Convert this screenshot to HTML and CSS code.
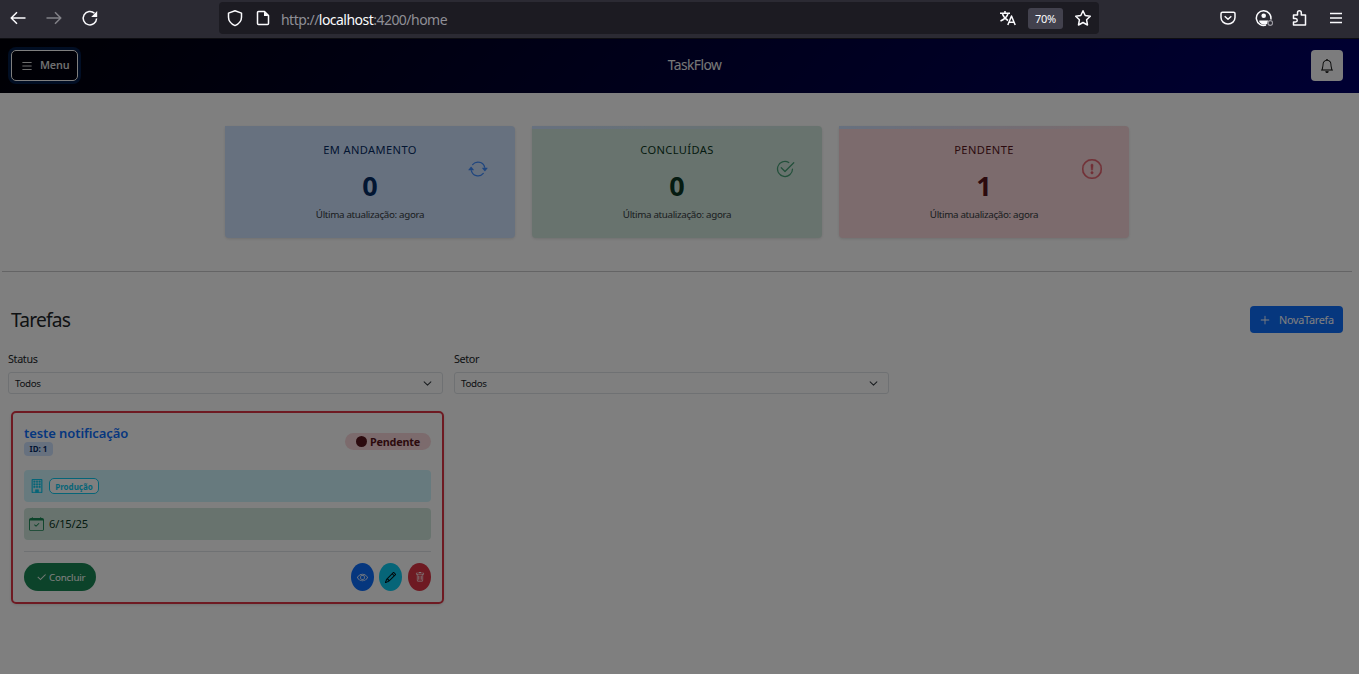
FILE: index.html
```html
<!DOCTYPE html>
<html lang="pt-BR">
<head>
<meta charset="utf-8">
<title>TaskFlow</title>
<link rel="stylesheet" href="styles.css">
</head>
<body>
<div class="browser">
  <div class="nav">
    <svg width="18" height="18" viewBox="0 0 18 18" class="line"><path d="M16.500 9H2M8 3.200 2.200 9 8 14.800"/></svg>
    <svg width="18" height="18" viewBox="0 0 18 18" class="line dim"><path d="M1.500 9H16M10 3.200 15.800 9 10 14.800"/></svg>
    <svg width="18" height="18" viewBox="0 0 18 18" class="line"><path d="M15.600 9.500A6.700 6.700 0 1 1 13.500 4.300"/><path class="solid" d="M16.200 2v6h-6z"/></svg>
  </div>
  <div class="address">
    <svg width="18" height="18" viewBox="0 0 18 18" class="line shield"><path d="M9 1.700 15.500 4.100v4.200c0 3.900-2.800 6.700-6.500 8.300C5.300 15 2.500 12.200 2.500 8.300V4.100z"/></svg>
    <svg width="14" height="16" viewBox="0 0 14 16" class="line file"><path d="M2.500 1.500H8.500L12.500 5.500v8a1 1 0 0 1-1 1H2.500a1 1 0 0 1-1-1v-11a1 1 0 0 1 1-1z"/><path class="solid" d="M8 1.500v4.500h4.500z"/></svg>
    <div class="url">http://<b>localhost</b>:4200/home</div>
    <svg width="18" height="18" viewBox="0 0 18 18" class="line translate"><path d="M1 4.200h10M6 2v2M9 4.500C8 8.500 5 10.500 1.500 12M3.500 5c1 3 3 5 5.500 6.500M8.800 16l3.700-9 3.700 9M10.200 13.200h4.600"/></svg>
    <div class="zoom">70%</div>
    <svg width="18" height="18" viewBox="0 0 18 18" class="line star"><path d="m9 1.800 2.200 4.700 5.100.7-3.700 3.600.9 5.200L9 13.500 4.500 16l.9-5.200L1.700 7.200l5.100-.7z"/></svg>
  </div>
  <div class="tools">
    <svg width="18" height="18" viewBox="0 0 18 18" class="line"><path d="M3.500 3.200h11a1.500 1.500 0 0 1 1.500 1.500v3.800a7 6.500 0 0 1-14 0V4.700a1.500 1.500 0 0 1 1.500-1.500zM5.700 7.200 9 10.300l3.300-3.100"/></svg>
    <svg width="18" height="18" viewBox="0 0 18 18" class="line"><path d="M11 16A7.300 7.300 0 1 1 15.800 10.500"/><circle class="solid" cx="8.700" cy="6.800" r="2.300"/><path class="solid" d="M4.300 11.500h8.800l-1 3.500c-2.500 1.200-6 .5-7.800-2z"/><circle class="dot" cx="15.300" cy="14" r="2.300"/></svg>
    <svg width="18" height="18" viewBox="0 0 18 18" class="line"><path d="M2.500 6h4V3.700a1.900 1.900 0 0 1 3.800 0V6h4.200v10h-12v-3h2a1.700 1.700 0 0 0 0-3.500h-2z"/></svg>
    <svg width="18" height="18" viewBox="0 0 18 18" class="line"><path d="M3 4.500h12M3 9h12M3 13.500h12"/></svg>
  </div>
</div>
<div class="page">
  <header class="topbar">
    <button class="menu"><svg width="14" height="14" viewBox="0 0 16 16" class="bi"><path d="M2.500 12a.5.5 0 0 1 .5-.5h10a.5.5 0 0 1 0 1H3a.5.5 0 0 1-.5-.5m0-4a.5.5 0 0 1 .5-.5h10a.5.5 0 0 1 0 1H3a.5.5 0 0 1-.5-.5m0-4a.5.5 0 0 1 .5-.5h10a.5.5 0 0 1 0 1H3a.5.5 0 0 1-.5-.5"/></svg><span>Menu</span></button>
    <div class="brand">TaskFlow</div>
    <button class="bell"><svg width="14" height="14" viewBox="0 0 16 16" class="bi"><path d="M8 16a2 2 0 0 0 2-2H6a2 2 0 0 0 2 2M8 1.918l-.797.161A4 4 0 0 0 4 6c0 .628-.134 2.197-.459 3.742-.16.767-.376 1.566-.663 2.258h10.244c-.287-.692-.502-1.490-.663-2.258C12.134 8.197 12 6.628 12 6a4 4 0 0 0-3.203-3.920zM14.220 12c.223.447.481.801.780 1H1c.299-.199.557-.553.780-1C2.680 10.200 3 6.880 3 6c0-2.420 1.720-4.440 4.005-4.901a1 1 0 1 1 1.990 0A5 5 0 0 1 13 6c0 .880.320 4.200 1.220 6"/></svg></button>
  </header>

  <section class="stats">
    <article class="stat primary">
      <div class="stat-text"><h6>EM ANDAMENTO</h6><strong>0</strong><small>Última atualização: agora</small></div>
      <svg width="20" height="20" viewBox="0 0 16 16" class="bi"><path d="M11.534 7h3.932a.25.25 0 0 1 .192.410l-1.966 2.360a.25.25 0 0 1-.384 0l-1.966-2.360a.25.25 0 0 1 .192-.410m-11 2h3.932a.25.25 0 0 0 .192-.410L2.692 6.230a.25.25 0 0 0-.384 0L.342 8.590A.25.25 0 0 0 .534 9"/><path fill-rule="evenodd" d="M8 3c-1.552 0-2.940.707-3.857 1.818a.5.5 0 1 1-.771-.636A6.002 6.002 0 0 1 13.917 7H12.900A5 5 0 0 0 8 3M3.100 9a5.002 5.002 0 0 0 8.757 2.182.5.5 0 1 1 .771.636A6.002 6.002 0 0 1 2.083 9z"/></svg>
    </article>
    <article class="stat success">
      <div class="stat-text"><h6>CONCLUÍDAS</h6><strong>0</strong><small>Última atualização: agora</small></div>
      <svg width="20" height="20" viewBox="0 0 16 16" class="bi"><path d="M2.500 8a5.500 5.500 0 0 1 8.250-4.764.5.5 0 0 0 .5-.866A6.500 6.500 0 1 0 14.500 8a.5.5 0 0 0-1 0 5.500 5.500 0 1 1-11 0"/><path d="M15.354 3.354a.5.5 0 0 0-.708-.708L8 9.293 5.354 6.646a.5.5 0 1 0-.708.708l3 3a.5.5 0 0 0 .708 0z"/></svg>
    </article>
    <article class="stat danger">
      <div class="stat-text"><h6>PENDENTE</h6><strong>1</strong><small>Última atualização: agora</small></div>
      <svg width="20" height="20" viewBox="0 0 16 16" class="bi heavy"><path d="M8 15A7 7 0 1 1 8 1a7 7 0 0 1 0 14m0 1A8 8 0 1 0 8 0a8 8 0 0 0 0 16"/><path d="M7.002 11a1 1 0 1 1 2 0 1 1 0 0 1-2 0M7.100 4.995a.905.905 0 1 1 1.800 0l-.350 3.507a.552.552 0 0 1-1.100 0z"/></svg>
    </article>
  </section>

  <hr class="divider">

  <div class="heading">
    <h1>Tarefas</h1>
    <button class="new"><svg width="14" height="14" viewBox="0 0 16 16" class="bi"><path d="M8 3a.5.5 0 0 1 .5.5v4h4a.5.5 0 0 1 0 1h-4v4a.5.5 0 0 1-1 0v-4h-4a.5.5 0 0 1 0-1h4v-4A.5.5 0 0 1 8 3"/></svg><span>NovaTarefa</span></button>
  </div>

  <div class="filters">
    <div class="field"><label>Status</label><div class="select"><span>Todos</span><svg width="9" height="9" viewBox="0 0 16 16"><path d="m2 5 6 6 6-6"/></svg></div></div>
    <div class="field"><label>Setor</label><div class="select"><span>Todos</span><svg width="9" height="9" viewBox="0 0 16 16"><path d="m2 5 6 6 6-6"/></svg></div></div>
  </div>

  <article class="task">
    <div class="task-head">
      <div><h5>teste notificação</h5><span class="id">ID: 1</span></div>
      <span class="status"><i></i><span>Pendente</span></span>
    </div>
    <div class="row sector">
      <svg width="14" height="14" viewBox="0 0 16 16" class="bi heavy"><path d="M4 2.500a.5.5 0 0 1 .5-.5h1a.5.5 0 0 1 .5.5v1a.5.5 0 0 1-.5.5h-1a.5.5 0 0 1-.5-.5zm3 0a.5.5 0 0 1 .5-.5h1a.5.5 0 0 1 .5.5v1a.5.5 0 0 1-.5.5h-1a.5.5 0 0 1-.5-.5zm3.500-.5a.5.5 0 0 0-.5.5v1a.5.5 0 0 0 .5.5h1a.5.5 0 0 0 .5-.5v-1a.5.5 0 0 0-.5-.5zM4 5.500a.5.5 0 0 1 .5-.5h1a.5.5 0 0 1 .5.5v1a.5.5 0 0 1-.5.5h-1a.5.5 0 0 1-.5-.5zM7.500 5a.5.5 0 0 0-.5.5v1a.5.5 0 0 0 .5.5h1a.5.5 0 0 0 .5-.5v-1a.5.5 0 0 0-.5-.5zm2.500.5a.5.5 0 0 1 .5-.5h1a.5.5 0 0 1 .5.5v1a.5.5 0 0 1-.5.5h-1a.5.5 0 0 1-.5-.5zM4.500 8a.5.5 0 0 0-.5.5v1a.5.5 0 0 0 .5.5h1a.5.5 0 0 0 .5-.5v-1a.5.5 0 0 0-.5-.5zm2.500.5a.5.5 0 0 1 .5-.5h1a.5.5 0 0 1 .5.5v1a.5.5 0 0 1-.5.5h-1a.5.5 0 0 1-.5-.5zm3.500-.5a.5.5 0 0 0-.5.5v1a.5.5 0 0 0 .5.5h1a.5.5 0 0 0 .5-.5v-1a.5.5 0 0 0-.5-.5z"/><path d="M2 1a1 1 0 0 1 1-1h10a1 1 0 0 1 1 1v14a1 1 0 0 1-1 1H3a1 1 0 0 1-1-1zm11 0H3v14h3v-2.500a.5.5 0 0 1 .5-.5h3a.5.5 0 0 1 .5.5V15h3z"/></svg>
      <span class="pill">Produção</span>
    </div>
    <div class="row date">
      <svg width="15" height="14" viewBox="0 0 16 16" preserveAspectRatio="none" class="bi"><path d="M10.854 7.146a.5.5 0 0 1 0 .708l-3 3a.5.5 0 0 1-.708 0l-1.500-1.500a.5.5 0 1 1 .708-.708L7.500 9.793l2.646-2.647a.5.5 0 0 1 .708 0"/><path d="M3.500 0a.5.5 0 0 1 .5.5V1h8V.5a.5.5 0 0 1 1 0V1h1a2 2 0 0 1 2 2v11a2 2 0 0 1-2 2H2a2 2 0 0 1-2-2V3a2 2 0 0 1 2-2h1V.5a.5.5 0 0 1 .5-.5M1 4v10a1 1 0 0 0 1 1h12a1 1 0 0 0 1-1V4z"/></svg>
      <span>6/15/25</span>
    </div>
    <div class="actions">
      <button class="done"><svg width="11" height="11" viewBox="0 0 16 16" class="bi heavy"><path d="M13.854 3.646a.5.5 0 0 1 0 .708l-7 7a.5.5 0 0 1-.708 0l-3.500-3.500a.5.5 0 1 1 .708-.708L6.500 10.293l6.646-6.647a.5.5 0 0 1 .708 0"/></svg><span>Concluir</span></button>
      <button class="round view"><svg width="11" height="11" viewBox="0 0 16 16" class="bi"><path d="M16 8s-3-5.500-8-5.500S0 8 0 8s3 5.500 8 5.500S16 8 16 8M1.173 8a13 13 0 0 1 1.660-2.043C4.120 4.668 5.880 3.500 8 3.500s3.879 1.168 5.168 2.457A13 13 0 0 1 14.828 8q-.086.130-.195.288c-.335.480-.830 1.120-1.465 1.755C11.879 11.332 10.119 12.500 8 12.500s-3.879-1.168-5.168-2.457A13 13 0 0 1 1.172 8z"/><path d="M8 5.500a2.500 2.500 0 1 0 0 5 2.500 2.500 0 0 0 0-5M4.500 8a3.500 3.500 0 1 1 7 0 3.500 3.500 0 0 1-7 0"/></svg></button>
      <button class="round edit"><svg width="11" height="11" viewBox="0 0 16 16" class="bi heavy"><path d="M12.146.146a.5.5 0 0 1 .708 0l3 3a.5.5 0 0 1 0 .708l-10 10a.5.5 0 0 1-.168.110l-5 2a.5.5 0 0 1-.650-.650l2-5a.5.5 0 0 1 .110-.168zM11.207 2.500 13.500 4.793 14.793 3.500 12.500 1.207zm1.586 3L10.500 3.207 4 9.707V10h.5a.5.5 0 0 1 .5.5v.5h.5a.5.5 0 0 1 .5.5v.5h.293zm-9.761 5.175-.106.106-1.528 3.821 3.821-1.528.106-.106A.5.5 0 0 1 5 12.500V12h-.5a.5.5 0 0 1-.5-.5V11h-.5a.5.5 0 0 1-.468-.325"/></svg></button>
      <button class="round remove"><svg width="10" height="10" viewBox="0 0 16 16" class="bi"><path d="M5.500 5.500A.5.5 0 0 1 6 6v6a.5.5 0 0 1-1 0V6a.5.5 0 0 1 .5-.5m2.500 0a.5.5 0 0 1 .5.5v6a.5.5 0 0 1-1 0V6a.5.5 0 0 1 .5-.5m3 .5a.5.5 0 0 0-1 0v6a.5.5 0 0 0 1 0z"/><path d="M14.500 3a1 1 0 0 1-1 1H13v9a2 2 0 0 1-2 2H5a2 2 0 0 1-2-2V4h-.5a1 1 0 0 1-1-1V2a1 1 0 0 1 1-1H6a1 1 0 0 1 1-1h2a1 1 0 0 1 1 1h3.500a1 1 0 0 1 1 1zM4.118 4 4 4.059V13a1 1 0 0 0 1 1h6a1 1 0 0 0 1-1V4.059L11.882 4zM2.500 3h11V2h-11z"/></svg></button>
    </div>
  </article>
  <div class="backdrop"></div>
</div>
</body>
</html>
```
FILE: styles.css
```css
* { box-sizing: border-box; }
body {
  margin: 0;
  height: 674px;
  overflow: hidden;
  display: flex;
  flex-direction: column;
  font: 11.2px/1.5 "Noto Sans", "Open Sans", sans-serif;
  color: #212529;
}
h1, h5, h6 { margin: 0; font-weight: 400; }
button { font: inherit; border: 0; padding: 0; display: flex; align-items: center; white-space: nowrap; }
svg { display: block; flex: none; }
.bi { fill: currentColor; }
.heavy { stroke: currentColor; stroke-width: .35; }

.browser {
  height: 39px;
  flex: none;
  background: #2b2a33;
  border-bottom: 1px solid #0e0e12;
  display: flex;
  align-items: flex-start;
  color: #fbfbfe;
}
.line { fill: none; stroke: #fbfbfe; stroke-width: 1.5; stroke-linejoin: round; }
.line .solid { fill: #fbfbfe; stroke: none; }
.line .dot { stroke: #9b9aa2; fill: #2b2a33; stroke-width: 1.2; }
.dim { opacity: .42; }
.nav { width: 219px; padding: 9px 0 0 9px; display: flex; gap: 18px; }
.address {
  width: 880px;
  height: 32px;
  margin-top: 2px;
  padding-left: 7px;
  border-radius: 4px;
  background: #1c1b22;
  display: flex;
  align-items: center;
}
.file { margin-left: 12px; }
.url { flex: 1; margin-left: 11px; padding-top: 2px; font-size: 14px; letter-spacing: -.53px; color: #8f8f96; }
.url b { font-weight: 400; color: #fbfbfe; }
.zoom {
  width: 35px;
  height: 21px;
  margin: 0 11px;
  border-radius: 3px;
  background: #42414d;
  font-size: 11px;
  line-height: 21px;
  letter-spacing: -.2px;
  text-align: center;
}
.star { margin-right: 7px; }
.tools { display: flex; padding: 9px 0 0 120px; gap: 18px; }

.page { position: relative; flex: 1; background: #fff; }
.backdrop { position: absolute; inset: 0; background: rgba(0, 0, 0, .5); }

.topbar {
  height: 54px;
  padding: 0 16px 1px 11px;
  background: linear-gradient(135deg, #000008, #000066);
  display: flex;
  justify-content: space-between;
  align-items: center;
  color: #fff;
}
.menu {
  width: 67px;
  height: 31px;
  padding-left: 8px;
  gap: 6px;
  border: 1px solid #fff;
  border-radius: 5px;
  background: transparent;
  box-shadow: 0 0 0 3px rgba(13, 110, 253, .25);
  color: #dcdcdc;
  font-weight: 600;
  font-size: 10.8px;
  letter-spacing: -.2px;
}
.brand { font-size: 13.8px; letter-spacing: -.55px; color: #f0f0f0; }
.bell { width: 32px; height: 31px; border-radius: 4px; background: #f8f9fa; color: #000; justify-content: center; }

.stats { display: flex; justify-content: center; gap: 17px; padding: 33px 5px 0 0; }
.stat {
  width: 290px;
  height: 112px;
  border-radius: 0 4px 4px 4px;
  box-shadow: 0 1px 3px rgba(0, 0, 0, .12);
  display: grid;
  grid-template: 1fr / 1fr;
}
.stat > * { grid-area: 1 / 1; }
.stat > svg { justify-self: end; margin: 33px 27px 0 0; opacity: .75; }
.stat-text { padding-top: 16px; display: flex; flex-direction: column; align-items: center; }
.stat h6 { font-size: 11.1px; line-height: 16px; letter-spacing: .4px; }
.stat strong { margin-top: 10px; font-size: 27px; line-height: 36px; font-weight: 700; }
.stat small { margin-top: 3px; font-size: 9.8px; line-height: 16px; letter-spacing: -.34px; color: #353a3f; }
.primary { background: linear-gradient(90deg, #cfe2ff, transparent) 0 0 / 100% 3px no-repeat #cfe2ff; color: #052c65; }
.success { background: linear-gradient(90deg, #cfe2ff, transparent) 0 0 / 100% 3px no-repeat #d1e7dd; color: #0a3622; }
.danger { background: linear-gradient(90deg, #cfe2ff, transparent) 0 0 / 100% 3px no-repeat #f8d7da; color: #58151c; }
.primary > svg { color: #0d6efd; }
.success > svg { color: #198754; }
.danger > svg { color: #dc3545; }

.divider { margin: 33px 7px 0 2px; border: 0; height: 1px; background: #c8c9ca; }

.heading { margin: 34px 16px 0 11px; display: flex; justify-content: space-between; align-items: center; height: 27px; }
.heading h1 { font-size: 19.2px; line-height: 27px; letter-spacing: -.8px; }
.new { width: 93px; height: 27px; padding-left: 8px; gap: 7px; border-radius: 4px; background: #0d6efd; color: #fff; font-size: 10.8px; letter-spacing: -.25px; }
.new span { padding-top: 2px; }

.filters { margin: 17px 0 0 8px; display: flex; gap: 11px; }
.field { width: 435px; }
.field label { display: block; font-size: 10.8px; line-height: 17px; letter-spacing: -.35px; }
.select {
  height: 22px;
  margin-top: 5px;
  padding: 0 10px 0 6px;
  border: 1px solid #dee2e6;
  border-radius: 3px;
  display: flex;
  align-items: center;
  justify-content: space-between;
  font-size: 9.8px;
  letter-spacing: -.35px;
}
.select span { padding-top: 3px; }
.select svg { fill: none; stroke: #343a40; stroke-width: 1.8; stroke-linecap: round; stroke-linejoin: round; }

.task {
  width: 433px;
  height: 193px;
  margin: 17px 0 0 11px;
  padding: 12px 11px 0;
  border: 2px solid #dc3545;
  border-radius: 5px;
  box-shadow: 0 1px 3px rgba(0, 0, 0, .12);
}
.task-head { height: 45px; display: flex; justify-content: space-between; }
.task-head h5 { font-size: 13px; line-height: 17px; font-weight: 600; color: #0d6efd; letter-spacing: -.08px; }
.id { display: block; width: 29px; height: 14px; border-radius: 4px; background: #cfe2ff; color: #052c65; font-size: 8px; line-height: 14px; font-weight: 700; text-align: center; }
.status {
  width: 86px;
  height: 17px;
  margin-top: 8px;
  border-radius: 9px;
  background: #f8d7da;
  color: #58151c;
  font-size: 10.8px;
  line-height: 17px;
  font-weight: 700;
  display: flex;
  justify-content: center;
  align-items: center;
  gap: 3px;
  letter-spacing: -.18px;
}
.status i { width: 11px; height: 11px; border-radius: 50%; background: currentColor; }
.row { height: 32px; border-radius: 4px; display: flex; align-items: center; padding-left: 5px; gap: 5px; }
.sector { background: #cff4fc; color: #0dcaf0; padding-left: 6px; }
.pill { width: 50px; height: 16px; border: 1px solid; border-radius: 5px; font-size: 8px; line-height: 16px; font-weight: 700; text-align: center; background: #fff; }
.date { margin-top: 6px; background: #d1e7dd; color: #198754; }
.date span { color: #0a3622; font-size: 11.2px; letter-spacing: -.2px; }
.actions { margin-top: 11px; padding-top: 11px; border-top: 1px solid #dee2e6; display: flex; gap: 5px; }
.done { width: 72px; height: 28px; padding-left: 12px; gap: 2px; border-radius: 14px; margin-right: auto; background: #198754; color: #fff; font-size: 9.8px; letter-spacing: -.2px; }
.done span { padding-top: 3px; }
.round { width: 23px; height: 28px; border-radius: 50%; justify-content: center; color: #fff; }
.view { background: #0d6efd; }
.edit { background: #0dcaf0; color: #000; margin-right: 1px; }
.remove { background: #dc3545; }
```
